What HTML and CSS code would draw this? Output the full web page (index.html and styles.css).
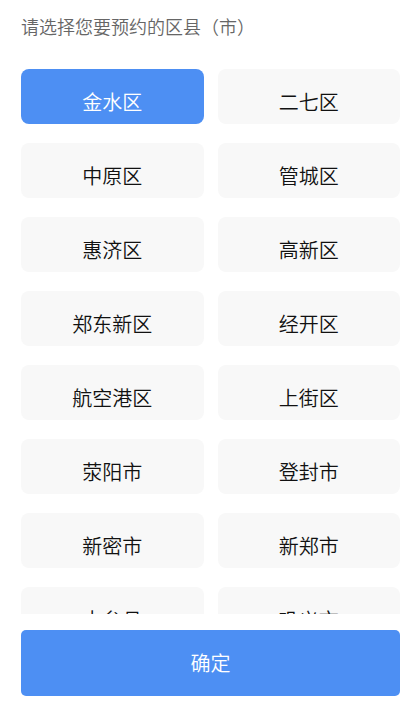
FILE: index.html
```html
<!DOCTYPE html>
<html lang="zh-CN">
<head>
<meta charset="utf-8">
<title>选择区县</title>
<link rel="stylesheet" href="styles.css">
</head>
<body>
<div class="page">
  <div class="title">请选择您要预约的区县（市）</div>
  <div class="list">
    <div class="cell active">金水区</div>
    <div class="cell">二七区</div>
    <div class="cell">中原区</div>
    <div class="cell">管城区</div>
    <div class="cell">惠济区</div>
    <div class="cell">高新区</div>
    <div class="cell">郑东新区</div>
    <div class="cell">经开区</div>
    <div class="cell">航空港区</div>
    <div class="cell">上街区</div>
    <div class="cell">荥阳市</div>
    <div class="cell">登封市</div>
    <div class="cell">新密市</div>
    <div class="cell">新郑市</div>
    <div class="cell">中牟县</div>
    <div class="cell">巩义市</div>
  </div>
  <div class="confirm">确定</div>
</div>
</body>
</html>
```
FILE: styles.css
```css
html, body {
  margin: 0;
  padding: 0;
  background: #ffffff;
}
body {
  font-family: "Noto Sans CJK SC", "Noto Sans", sans-serif;
}
.page {
  width: 379px;
  padding: 0 15px 0 21px;
}
.title {
  margin-top: 14px;
  font-size: 18px;
  line-height: 24px;
  font-weight: 350;
  color: #666666;
}
.list {
  margin-top: 31px;
  height: 545px;
  overflow: hidden;
  display: grid;
  grid-template-columns: 1fr 1fr;
  column-gap: 14px;
  row-gap: 19px;
  align-content: start;
}
.cell {
  box-sizing: border-box;
  height: 55px;
  padding-top: 12px;
  line-height: 42px;
  text-align: center;
  font-size: 20px;
  font-weight: 350;
  color: #111111;
  background: #f8f8f8;
  border-radius: 8px;
}
.cell.active {
  background: #4d8ff3;
  color: #ffffff;
}
.confirm {
  margin-top: 16px;
  height: 66px;
  line-height: 66px;
  text-align: center;
  font-size: 20px;
  font-weight: 350;
  color: #ffffff;
  background: #4d8ff3;
  border-radius: 5px;
}
```
